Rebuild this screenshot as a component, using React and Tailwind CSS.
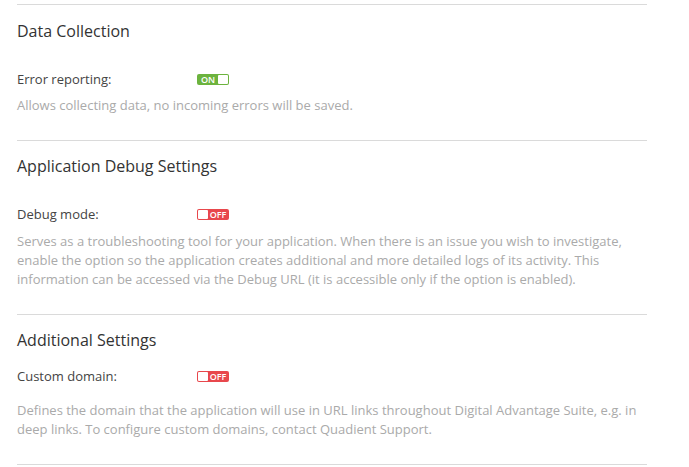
import React from 'react';

const Toggle = ({ on }) => (
  <div
    className={`flex h-[11px] w-[32px] items-center rounded-[2px] p-[1px] ${
      on ? 'bg-[#6cb33e] flex-row' : 'bg-[#e8474c] flex-row-reverse'
    }`}
  >
    <span className="flex-1 text-center text-[9px] font-semibold leading-[9px] text-white">
      {on ? 'ON' : 'OFF'}
    </span>
    <span className="h-[9px] w-[10px] rounded-[1px] bg-white" />
  </div>
);

const Divider = ({ className = '' }) => (
  <div className={`border-t border-[#dadada] ${className}`} />
);

const Row = ({ label, on, className = '' }) => (
  <div className={`flex items-center ${className}`}>
    <div className="w-[180px] text-[13px] leading-[19px] text-[#444]">{label}</div>
    <Toggle on={on} />
  </div>
);

const Desc = ({ children, className = '' }) => (
  <p className={`text-[13px] leading-[19px] text-[#aaaaaa] ${className}`}>{children}</p>
);

const Heading = ({ children, className = '' }) => (
  <h2 className={`text-[16px] leading-[24px] text-[#333] ${className}`}>{children}</h2>
);

export default function App() {
  return (
    <div
      className="min-h-screen bg-white pl-[17px] pt-[4px]"
      style={{ fontFamily: '"Open Sans", "Noto Sans", sans-serif' }}
    >
      <div className="w-[630px]">
        <Divider />

        {/* Data Collection */}
        <section className="pt-[14px] pb-[25px]">
          <Heading>Data Collection</Heading>
          <Row label="Error reporting:" on className="mt-[27px]" />
          <Desc className="mt-[7px]">Allows collecting data, no incoming errors will be saved.</Desc>
        </section>
        <Divider />

        {/* Application Debug Settings */}
        <section className="pt-[13px] pb-[25px]">
          <Heading>Application Debug Settings</Heading>
          <Row label="Debug mode:" on={false} className="mt-[27px]" />
          <Desc className="mt-[8px] pr-[4px]">
            Serves as a troubleshooting tool for your application. When there is an issue you wish to investigate,
            enable the option so the application creates additional and more detailed logs of its activity. This
            information can be accessed via the Debug URL (it is accessible only if the option is enabled).
          </Desc>
        </section>
        <Divider />

        {/* Additional Settings */}
        <section className="pt-[13px] pb-[25px]">
          <Heading>Additional Settings</Heading>
          <Row label="Custom domain:" on={false} className="mt-[15px]" />
          <Desc className="mt-[15px]">
            Defines the domain that the application will use in URL links throughout Digital Advantage Suite, e.g. in
            deep links. To configure custom domains, contact Quadient Support.
          </Desc>
        </section>
        <Divider />
      </div>
    </div>
  );
}
